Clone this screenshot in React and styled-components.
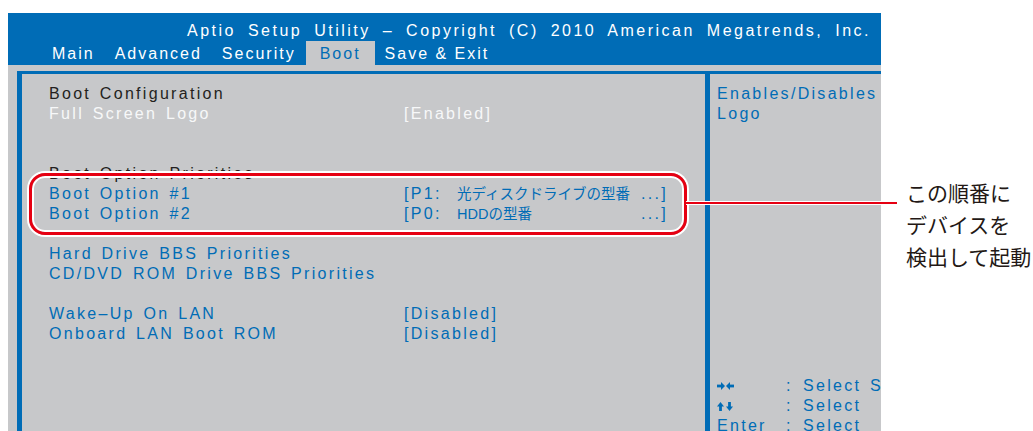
import React from 'react';
import styled, { createGlobalStyle } from 'styled-components';

const BLUE = '#006cb6';
const GRAY = '#c7c8ca';
const RED = '#e60012';
const INK = '#231f20';

const Global = createGlobalStyle`
  html, body { margin: 0; padding: 0; background: #fff; }
  #root { width: 1033px; height: 431px; overflow: hidden; }
`;

const Page = styled.div`
  position: relative;
  display: flex;
  align-items: flex-start;
  width: 1033px;
  height: 431px;
  overflow: hidden;
  font-family: "Liberation Sans", Arial, sans-serif;
`;

const Screen = styled.div`
  flex: none;
  width: 873px;
  margin: 13px 0 0 8px;
  background: ${GRAY};
  display: flex;
  flex-direction: column;
`;

const Header = styled.header`
  flex: none;
  height: 52px;
  box-sizing: border-box;
  padding-top: 8px;
  background: ${BLUE};
  color: #fff;
  font-size: 16px;
  letter-spacing: 2px;
`;

const Title = styled.div`
  line-height: 20px;
  text-align: right;
  padding-right: 10px;
  white-space: pre;
  letter-spacing: 2.5px;
  word-spacing: 5px;
`;

const Menu = styled.nav`
  display: flex;
  padding-left: 34px;
`;

const Tab = styled.div`
  height: 24px;
  box-sizing: border-box;
  padding: 2px ${p => (p.$active ? 14 : 10)}px 0;
  line-height: 22px;
  white-space: pre;
  background: ${p => (p.$active ? GRAY : 'transparent')};
  color: ${p => (p.$active ? BLUE : '#fff')};
`;

const Body = styled.div`
  flex: none;
  height: 365px;
  box-sizing: border-box;
  margin: 6px 0 0 9px;
  border-top: 3px solid ${BLUE};
  border-left: 5px solid ${BLUE};
  display: grid;
  grid-template-columns: 683px 5px 1fr;
`;

const Divider = styled.div`
  background: ${BLUE};
`;

const Options = styled.div`
  padding: 10px 0 0 27px;
  font-size: 16px;
  letter-spacing: 2.3px;
  word-spacing: 2px;
  line-height: 20px;
`;

const tones = { head: INK, item: BLUE, selected: '#f7f8f9' };

const Row = styled.div`
  display: grid;
  grid-template-columns: 355px auto;
  height: 20px;
  white-space: pre;
  color: ${p => tones[p.$tone || 'item']};
`;

const Device = styled.div`
  display: flex;
  width: 264px;
`;

const Port = styled.span`
  width: 53px;
  flex: none;
`;

const DeviceName = styled.span`
  flex: 1;
  font-family: "Liberation Sans", "Noto Sans CJK JP", sans-serif;
  font-size: 14.5px;
  letter-spacing: 0;
`;

const Help = styled.aside`
  display: flex;
  flex-direction: column;
  padding: 10px 0 0 7px;
  overflow: hidden;
  white-space: pre;
  color: ${BLUE};
  font-size: 16px;
  letter-spacing: 2.3px;
  word-spacing: 2px;
  line-height: 20px;
`;

const Legend = styled.div`
  margin-top: auto;
`;

const KeyRow = styled.div`
  display: grid;
  grid-template-columns: 69px 17px auto;
  align-items: center;
  height: 20px;
`;

const Ring = styled.div`
  position: absolute;
  left: 29px;
  top: 173px;
  width: 658px;
  height: 62px;
  box-sizing: border-box;
  border: 3px solid ${RED};
  border-radius: 16px;
  box-shadow: 0 0 0 2px #fff, inset 0 0 0 2px #fff;
`;

const Lead = styled.div`
  position: absolute;
  left: 686px;
  top: 201px;
  width: 211px;
  height: 2px;
  background: ${RED};
  border-top: 1.5px solid #fff;
  border-bottom: 1.5px solid #fff;
`;

const Note = styled.div`
  margin: 176px 0 0 25px;
  font-family: "Noto Sans CJK JP", sans-serif;
  font-size: 21px;
  line-height: 32px;
  color: #231815;
  white-space: nowrap;
`;

const LeftRight = () => (
  <svg width="17" height="8" viewBox="0 0 17 8" fill={BLUE}>
    <rect x="0" y="2.6" width="4.5" height="2.8" />
    <polygon points="4,0 8,4 4,8" />
    <polygon points="9,4 13,0 13,8" />
    <rect x="12.5" y="2.6" width="4.5" height="2.8" />
  </svg>
);

const UpDown = () => (
  <svg width="17" height="9" viewBox="0 0 17 9" fill={BLUE}>
    <polygon points="0,4.5 3.5,0 7,4.5" />
    <rect x="2.1" y="4" width="2.8" height="5" />
    <rect x="11.1" y="0" width="2.8" height="5" />
    <polygon points="9,4.5 12.5,9 16,4.5" />
  </svg>
);

const tabs = ['Main', 'Advanced', 'Security', 'Boot', 'Save & Exit'];

export default function App() {
  return (
    <Page>
      <Global />
      <Screen>
        <Header>
          <Title>Aptio Setup Utility – Copyright (C) 2010 American Megatrends, Inc.</Title>
          <Menu>
            {tabs.map(t => (
              <Tab key={t} $active={t === 'Boot'}>{t}</Tab>
            ))}
          </Menu>
        </Header>
        <Body>
          <Options>
            <Row $tone="head"><span>Boot Configuration</span></Row>
            <Row $tone="selected"><span>Full Screen Logo</span><span>[Enabled]</span></Row>
            <Row />
            <Row />
            <Row $tone="head"><span>Boot Option Priorities</span></Row>
            <Row>
              <span>Boot Option #1</span>
              <Device>
                <Port>[P1:</Port>
                <DeviceName>光ディスクドライブの型番</DeviceName>
                <span>...]</span>
              </Device>
            </Row>
            <Row>
              <span>Boot Option #2</span>
              <Device>
                <Port>[P0:</Port>
                <DeviceName>HDDの型番</DeviceName>
                <span>...]</span>
              </Device>
            </Row>
            <Row />
            <Row><span>Hard Drive BBS Priorities</span></Row>
            <Row><span>CD/DVD ROM Drive BBS Priorities</span></Row>
            <Row />
            <Row><span>Wake–Up On LAN</span><span>[Disabled]</span></Row>
            <Row><span>Onboard LAN Boot ROM</span><span>[Disabled]</span></Row>
          </Options>
          <Divider />
          <Help>
            <div>Enables/Disables</div>
            <div>Logo</div>
            <Legend>
              <KeyRow><LeftRight /><span>:</span><span>Select Screen</span></KeyRow>
              <KeyRow><UpDown /><span>:</span><span>Select</span></KeyRow>
              <KeyRow><span>Enter</span><span>:</span><span>Select</span></KeyRow>
            </Legend>
          </Help>
        </Body>
      </Screen>
      <Ring />
      <Lead />
      <Note>
        この順番に<br />
        デバイスを<br />
        検出して起動
      </Note>
    </Page>
  );
}
